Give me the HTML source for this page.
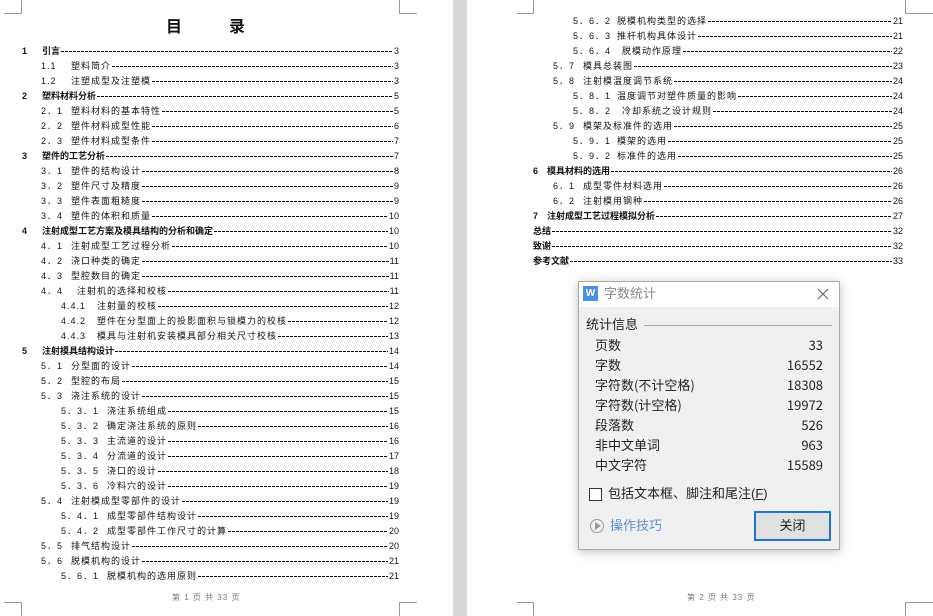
<!DOCTYPE html>
<html><head><meta charset="utf-8"><style>
*{margin:0;padding:0;box-sizing:border-box}
body{width:933px;height:616px;background:#d9d9d9;position:relative;overflow:hidden;font-family:"Liberation Sans","Noto Sans CJK SC",sans-serif;color:#111}
.page{position:absolute;top:0;height:616px;background:#fff}
.cm{position:absolute;border-color:#9a9a9a;border-style:solid;border-width:0}
.r{position:absolute;height:15px;display:flex;align-items:center;font-size:9px;white-space:nowrap;letter-spacing:1px}
.r .n{display:inline-block}
.r .l{flex:1;height:1px;margin:0 1px;background:repeating-linear-gradient(90deg,#000 0 3px,transparent 3px 4px);align-self:center;margin-top:2px}
.r .p{letter-spacing:0;font-weight:normal}
.b{font-weight:bold;letter-spacing:0}
.foot{position:absolute;top:592px;font-size:8px;color:#777;letter-spacing:1px}
.dlg{position:absolute;left:578px;top:281px;width:262px;height:269px;background:#f0f0f0;border:1px solid #a8a8a8;box-shadow:0 2px 10px rgba(0,0,0,.25);font-size:13px;color:#222;line-height:18px}
.tb{height:25px;background:#fff;position:relative}
.st,.sv{position:absolute;font-family:"Noto Sans CJK SC",sans-serif;font-size:13px;line-height:18px}
.st{left:16px}
.sv{right:16px}
</style></head><body>
<div class="page" style="left:0;width:453px">
<div class="cm" style="left:4px;top:13px;width:18px;border-top-width:1px"></div>
<div class="cm" style="left:21px;top:0;height:14px;border-left-width:1px"></div>
<div class="cm" style="left:399px;top:13px;width:18px;border-top-width:1px"></div>
<div class="cm" style="left:399px;top:0;height:14px;border-left-width:1px"></div>
<div class="cm" style="left:4px;top:602px;width:18px;border-top-width:1px"></div>
<div class="cm" style="left:21px;top:602px;height:14px;border-left-width:1px"></div>
<div class="cm" style="left:399px;top:602px;width:18px;border-top-width:1px"></div>
<div class="cm" style="left:399px;top:602px;height:14px;border-left-width:1px"></div>
<div style="position:absolute;left:166px;top:13px;font-size:16px;font-weight:bold">目</div>
<div style="position:absolute;left:229px;top:13px;font-size:16px;font-weight:bold">录</div>
<div class="foot" style="left:172px">第 1 页 共 33 页</div>
</div>
<div class="page" style="left:467px;width:466px">
<div class="cm" style="left:50px;top:13px;width:17px;border-top-width:1px"></div>
<div class="cm" style="left:66px;top:0;height:14px;border-left-width:1px"></div>
<div class="cm" style="left:438px;top:13px;width:28px;border-top-width:1px"></div>
<div class="cm" style="left:438px;top:0;height:14px;border-left-width:1px"></div>
<div class="cm" style="left:50px;top:602px;width:17px;border-top-width:1px"></div>
<div class="cm" style="left:66px;top:602px;height:14px;border-left-width:1px"></div>
<div class="cm" style="left:438px;top:602px;width:28px;border-top-width:1px"></div>
<div class="cm" style="left:438px;top:602px;height:14px;border-left-width:1px"></div>
<div class="foot" style="left:220px">第 2 页 共 33 页</div>
</div>

<!-- left TOC -->
<div class="r b" style="left:22px;right:534px;top:43px"><span class="n" style="width:20px">1</span>引言<span class="l"></span><span class="p">3</span></div>
<div class="r" style="left:41px;right:534px;top:58px"><span class="n" style="width:30px">1.1</span>塑料简介<span class="l"></span><span class="p">3</span></div>
<div class="r" style="left:41px;right:534px;top:73px"><span class="n" style="width:30px">1.2</span>注塑成型及注塑模<span class="l"></span><span class="p">3</span></div>
<div class="r b" style="left:22px;right:534px;top:88px"><span class="n" style="width:20px">2</span>塑料材料分析<span class="l"></span><span class="p">5</span></div>
<div class="r" style="left:41px;right:534px;top:103px"><span class="n" style="width:30px">2．1</span>塑料材料的基本特性<span class="l"></span><span class="p">5</span></div>
<div class="r" style="left:41px;right:534px;top:118px"><span class="n" style="width:30px">2．2</span>塑件材料成型性能<span class="l"></span><span class="p">6</span></div>
<div class="r" style="left:41px;right:534px;top:133px"><span class="n" style="width:30px">2．3</span>塑件材料成型条件<span class="l"></span><span class="p">7</span></div>
<div class="r b" style="left:22px;right:534px;top:148px"><span class="n" style="width:20px">3</span>塑件的工艺分析<span class="l"></span><span class="p">7</span></div>
<div class="r" style="left:41px;right:534px;top:163px"><span class="n" style="width:30px">3．1</span>塑件的结构设计<span class="l"></span><span class="p">8</span></div>
<div class="r" style="left:41px;right:534px;top:178px"><span class="n" style="width:30px">3．2</span>塑件尺寸及精度<span class="l"></span><span class="p">9</span></div>
<div class="r" style="left:41px;right:534px;top:193px"><span class="n" style="width:30px">3．3</span>塑件表面粗糙度<span class="l"></span><span class="p">9</span></div>
<div class="r" style="left:41px;right:534px;top:208px"><span class="n" style="width:30px">3．4</span>塑件的体积和质量<span class="l"></span><span class="p">10</span></div>
<div class="r b" style="left:22px;right:534px;top:223px"><span class="n" style="width:20px">4</span>注射成型工艺方案及模具结构的分析和确定<span class="l"></span><span class="p">10</span></div>
<div class="r" style="left:41px;right:534px;top:238px"><span class="n" style="width:30px">4．1</span>注射成型工艺过程分析<span class="l"></span><span class="p">10</span></div>
<div class="r" style="left:41px;right:534px;top:253px"><span class="n" style="width:30px">4．2</span>浇口种类的确定<span class="l"></span><span class="p">11</span></div>
<div class="r" style="left:41px;right:534px;top:268px"><span class="n" style="width:30px">4．3</span>型腔数目的确定<span class="l"></span><span class="p">11</span></div>
<div class="r" style="left:41px;right:534px;top:283px"><span class="n" style="width:36px">4．4</span>注射机的选择和校核<span class="l"></span><span class="p">11</span></div>
<div class="r" style="left:61px;right:534px;top:298px"><span class="n" style="width:36px">4.4.1</span>注射量的校核<span class="l"></span><span class="p">12</span></div>
<div class="r" style="left:61px;right:534px;top:313px"><span class="n" style="width:36px">4.4.2</span>塑件在分型面上的投影面积与锁模力的校核<span class="l"></span><span class="p">12</span></div>
<div class="r" style="left:61px;right:534px;top:328px"><span class="n" style="width:36px">4.4.3</span>模具与注射机安装模具部分相关尺寸校核<span class="l"></span><span class="p">13</span></div>
<div class="r b" style="left:22px;right:534px;top:343px"><span class="n" style="width:20px">5</span>注射模具结构设计<span class="l"></span><span class="p">14</span></div>
<div class="r" style="left:41px;right:534px;top:358px"><span class="n" style="width:30px">5．1</span>分型面的设计<span class="l"></span><span class="p">14</span></div>
<div class="r" style="left:41px;right:534px;top:373px"><span class="n" style="width:30px">5．2</span>型腔的布局<span class="l"></span><span class="p">15</span></div>
<div class="r" style="left:41px;right:534px;top:388px"><span class="n" style="width:30px">5．3</span>浇注系统的设计<span class="l"></span><span class="p">15</span></div>
<div class="r" style="left:61px;right:534px;top:403px"><span class="n" style="width:46px">5．3．1</span>浇注系统组成<span class="l"></span><span class="p">15</span></div>
<div class="r" style="left:61px;right:534px;top:418px"><span class="n" style="width:46px">5．3．2</span>确定浇注系统的原则<span class="l"></span><span class="p">16</span></div>
<div class="r" style="left:61px;right:534px;top:433px"><span class="n" style="width:46px">5．3．3</span>主流道的设计<span class="l"></span><span class="p">16</span></div>
<div class="r" style="left:61px;right:534px;top:448px"><span class="n" style="width:46px">5．3．4</span>分流道的设计<span class="l"></span><span class="p">17</span></div>
<div class="r" style="left:61px;right:534px;top:463px"><span class="n" style="width:46px">5．3．5</span>浇口的设计<span class="l"></span><span class="p">18</span></div>
<div class="r" style="left:61px;right:534px;top:478px"><span class="n" style="width:46px">5．3．6</span>冷料穴的设计<span class="l"></span><span class="p">19</span></div>
<div class="r" style="left:41px;right:534px;top:493px"><span class="n" style="width:30px">5．4</span>注射模成型零部件的设计<span class="l"></span><span class="p">19</span></div>
<div class="r" style="left:61px;right:534px;top:508px"><span class="n" style="width:46px">5．4．1</span>成型零部件结构设计<span class="l"></span><span class="p">19</span></div>
<div class="r" style="left:61px;right:534px;top:523px"><span class="n" style="width:46px">5．4．2</span>成型零部件工作尺寸的计算<span class="l"></span><span class="p">20</span></div>
<div class="r" style="left:41px;right:534px;top:538px"><span class="n" style="width:30px">5．5</span>排气结构设计<span class="l"></span><span class="p">20</span></div>
<div class="r" style="left:41px;right:534px;top:553px"><span class="n" style="width:30px">5．6</span>脱模机构的设计<span class="l"></span><span class="p">21</span></div>
<div class="r" style="left:61px;right:534px;top:568px"><span class="n" style="width:46px">5．6．1</span>脱模机构的选用原则<span class="l"></span><span class="p">21</span></div>

<!-- right TOC -->
<div class="r" style="left:573px;right:30px;top:13px"><span class="n" style="width:44px">5．6．2</span>脱模机构类型的选择<span class="l"></span><span class="p">21</span></div>
<div class="r" style="left:573px;right:30px;top:28px"><span class="n" style="width:44px">5．6．3</span>推杆机构具体设计<span class="l"></span><span class="p">21</span></div>
<div class="r" style="left:573px;right:30px;top:43px"><span class="n" style="width:49px">5．6．4</span>脱模动作原理<span class="l"></span><span class="p">22</span></div>
<div class="r" style="left:553px;right:30px;top:58px"><span class="n" style="width:30px">5．7</span>模具总装图<span class="l"></span><span class="p">23</span></div>
<div class="r" style="left:553px;right:30px;top:73px"><span class="n" style="width:30px">5．8</span>注射模温度调节系统<span class="l"></span><span class="p">24</span></div>
<div class="r" style="left:573px;right:30px;top:88px"><span class="n" style="width:44px">5．8．1</span>温度调节对塑件质量的影响<span class="l"></span><span class="p">24</span></div>
<div class="r" style="left:573px;right:30px;top:103px"><span class="n" style="width:49px">5．8．2</span>冷却系统之设计规则<span class="l"></span><span class="p">24</span></div>
<div class="r" style="left:553px;right:30px;top:118px"><span class="n" style="width:30px">5．9</span>模架及标准件的选用<span class="l"></span><span class="p">25</span></div>
<div class="r" style="left:573px;right:30px;top:133px"><span class="n" style="width:44px">5．9．1</span>模架的选用<span class="l"></span><span class="p">25</span></div>
<div class="r" style="left:573px;right:30px;top:148px"><span class="n" style="width:44px">5．9．2</span>标准件的选用<span class="l"></span><span class="p">25</span></div>
<div class="r b" style="left:533px;right:30px;top:163px"><span class="n" style="width:14px">6</span>模具材料的选用<span class="l"></span><span class="p">26</span></div>
<div class="r" style="left:553px;right:30px;top:178px"><span class="n" style="width:30px">6．1</span>成型零件材料选用<span class="l"></span><span class="p">26</span></div>
<div class="r" style="left:553px;right:30px;top:193px"><span class="n" style="width:30px">6．2</span>注射模用钢种<span class="l"></span><span class="p">26</span></div>
<div class="r b" style="left:533px;right:30px;top:208px"><span class="n" style="width:14px">7</span>注射成型工艺过程模拟分析<span class="l"></span><span class="p">27</span></div>
<div class="r b" style="left:533px;right:30px;top:223px">总结<span class="l"></span><span class="p">32</span></div>
<div class="r b" style="left:533px;right:30px;top:238px">致谢<span class="l"></span><span class="p">32</span></div>
<div class="r b" style="left:533px;right:30px;top:253px">参考文献<span class="l"></span><span class="p">33</span></div>

<div class="dlg">
<div class="tb">
<div style="position:absolute;left:4px;top:4px;width:15px;height:15px;background:#4a8ef0;color:#fff;font-size:10px;line-height:15px;text-align:center;font-weight:bold">W</div>
<div style="position:absolute;left:25px;top:3px;color:#888;font-size:13px">字数统计</div>
<svg style="position:absolute;right:10px;top:6px" width="12" height="12"><path d="M1 1L11 11M11 1L1 11" stroke="#666" stroke-width="1.2"/></svg>
</div>
<div style="position:absolute;left:7px;top:34px">统计信息</div>
<div style="position:absolute;left:65px;right:7px;top:43px;border-top:1px solid #aaa"></div>
<div class="st" style="top:54px">页数</div><div class="sv" style="top:54px">33</div>
<div class="st" style="top:74px">字数</div><div class="sv" style="top:74px">16552</div>
<div class="st" style="top:94px">字符数(不计空格)</div><div class="sv" style="top:94px">18308</div>
<div class="st" style="top:114px">字符数(计空格)</div><div class="sv" style="top:114px">19972</div>
<div class="st" style="top:134px">段落数</div><div class="sv" style="top:134px">526</div>
<div class="st" style="top:154px">非中文单词</div><div class="sv" style="top:154px">963</div>
<div class="st" style="top:174px">中文字符</div><div class="sv" style="top:174px">15589</div>
<div style="position:absolute;left:10px;top:206px;width:13px;height:13px;border:1px solid #333;background:#fff"></div>
<div style="position:absolute;left:29px;top:203px">包括文本框、脚注和尾注(<u>F</u>)</div>
<div style="position:absolute;left:11px;top:237px;width:14px;height:14px;border:1px solid #999;border-radius:50%"></div>
<div style="position:absolute;left:16px;top:240px;width:0;height:0;border-left:6px solid #999;border-top:4px solid transparent;border-bottom:4px solid transparent"></div>
<div style="position:absolute;left:31px;top:235px;color:#5b8fd8">操作技巧</div>
<div style="position:absolute;left:175px;top:229px;width:77px;height:30px;border:2px solid #1a76d2;background:#e1e1e1;text-align:center;line-height:26px">关闭</div>
</div>
</body></html>
